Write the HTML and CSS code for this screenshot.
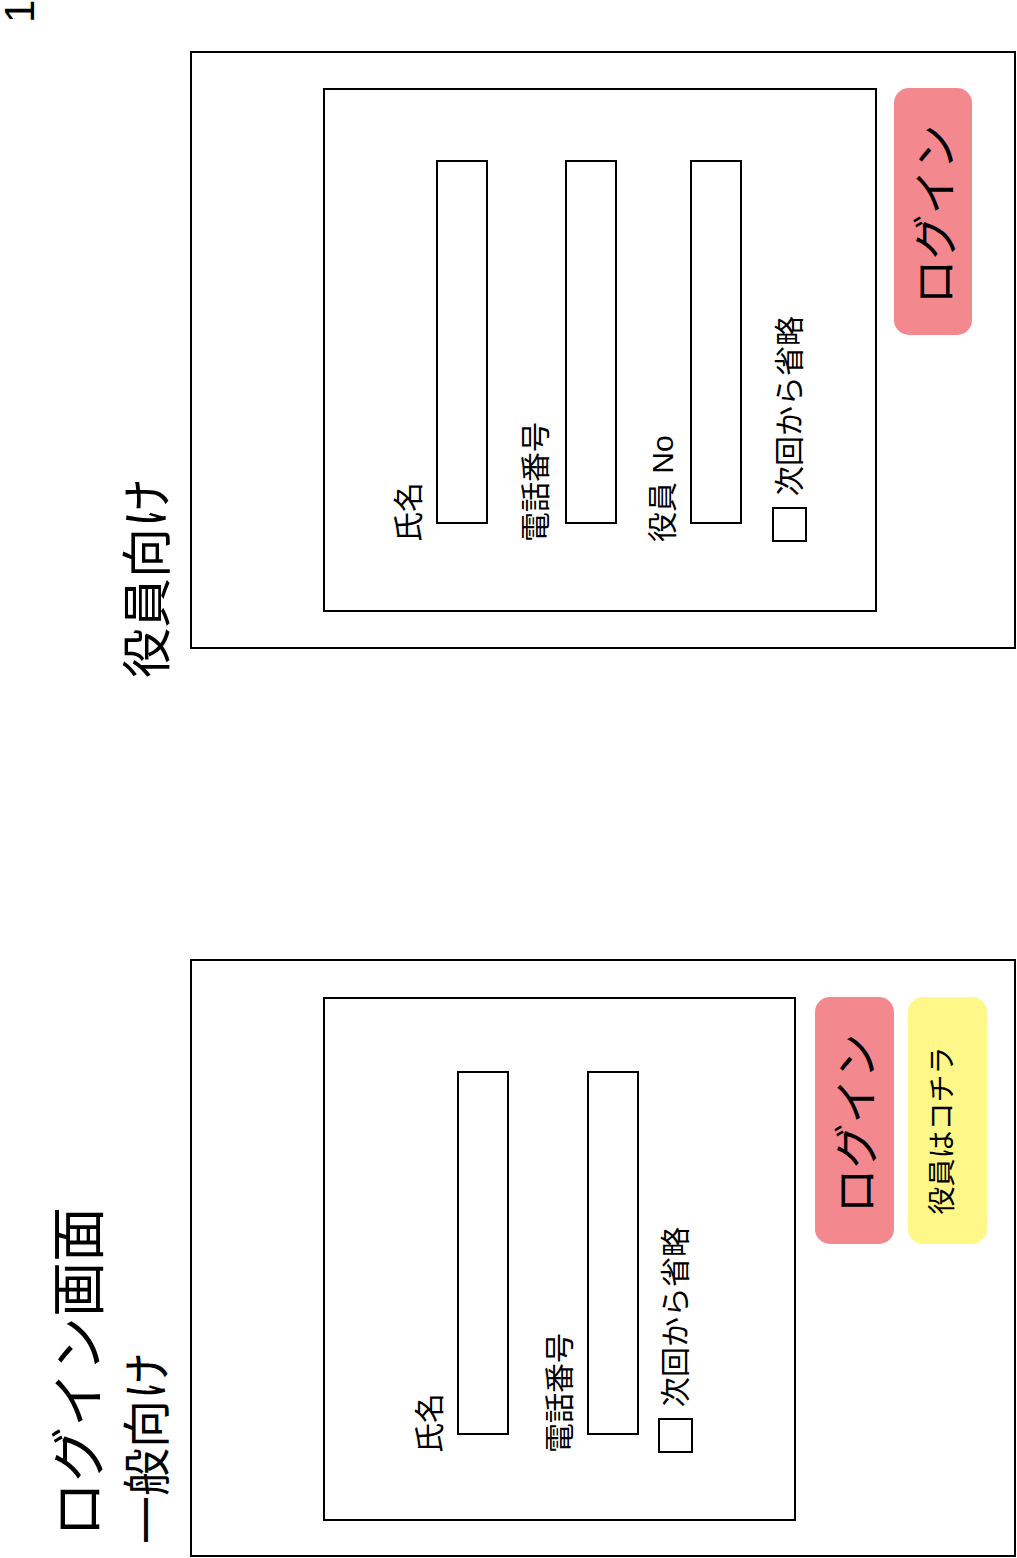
FILE: index.html
```html
<!DOCTYPE html>
<html lang="ja">
<head>
<meta charset="utf-8">
<title>ログイン画面</title>
<link rel="stylesheet" href="styles.css">
</head>
<body>
<div class="sheet">
<div class="stage">
  <section class="panel panel--general">
    <header class="panel-head">
      <h1 class="page-title">ログイン画面</h1>
      <h2 class="panel-title">一般向け</h2>
    </header>
    <div class="device">
      <div class="form-box">
        <div class="field">
          <span class="label">氏名</span>
          <span class="input"></span>
        </div>
        <div class="field">
          <span class="label">電話番号</span>
          <span class="input"></span>
        </div>
        <div class="remember">
          <span class="check"></span>
          <span class="remember-text">次回から省略</span>
        </div>
      </div>
      <div class="btn btn--login">ログイン</div>
      <div class="btn btn--exec">役員はコチラ</div>
    </div>
  </section>

  <section class="panel panel--exec">
    <header class="panel-head">
      <h2 class="panel-title">役員向け</h2>
    </header>
    <div class="device">
      <div class="form-box">
        <div class="field">
          <span class="label">氏名</span>
          <span class="input"></span>
        </div>
        <div class="field field--phone">
          <span class="label">電話番号</span>
          <span class="input"></span>
        </div>
        <div class="field field--no">
          <span class="label">役員 No</span>
          <span class="input"></span>
        </div>
        <div class="remember">
          <span class="check"></span>
          <span class="remember-text">次回から省略</span>
        </div>
      </div>
      <div class="btn btn--login">ログイン</div>
    </div>
  </section>

  <div class="page-num">1</div>
</div>
</div>
</body>
</html>
```

FILE: styles.css
```css
html, body {
  margin: 0;
  padding: 0;
  background: #ffffff;
  overflow: hidden;
}

body {
  font-family: "Liberation Sans", "Noto Sans CJK JP", sans-serif;
  color: #000000;
}

.sheet {
  width: 1017px;
  height: 1558px;
  overflow: hidden;
}

/* The whole sheet is laid out upright, then turned a quarter turn. */
.stage {
  width: 1558px;
  height: 1017px;
  display: flex;
  align-items: flex-start;
  transform-origin: 0 0;
  transform: translateY(1558px) rotate(-90deg);
}

.panel {
  width: 598px;
  display: flex;
  flex-direction: column;
  flex: none;
}

.panel--general {
  margin-left: 1px;
}

.panel--exec {
  margin-left: 310px;
}

.panel-head {
  height: 190px;
  display: flex;
  flex-direction: column;
  align-items: flex-start;
}

.page-title {
  margin: 52px 0 0 20px;
  font-size: 55px;
  line-height: 55px;
  font-weight: normal;
  white-space: nowrap;
}

.panel-title {
  margin: 0;
  font-size: 48px;
  line-height: 48px;
  font-weight: normal;
  white-space: nowrap;
}

.panel--general .panel-title {
  margin: 17px 0 0 13px;
}

.panel--exec .panel-title {
  margin: 124px 0 0 -29px;
  font-size: 50px;
  line-height: 48px;
}

.device {
  box-sizing: border-box;
  width: 598px;
  height: 826px;
  border: 2px solid #000;
  padding: 131px 0 0 34px;
  display: flex;
  flex-direction: column;
  align-items: flex-start;
}

.panel--exec .device {
  padding-left: 35px;
}

.form-box {
  box-sizing: border-box;
  width: 524px;
  height: 473px;
  border: 2px solid #000;
  padding: 90px 0 0 66px;
  display: flex;
  flex-direction: column;
  align-items: flex-start;
}

.panel--exec .form-box {
  height: 554px;
  padding: 69px 0 0 68px;
}

.field {
  display: flex;
  flex-direction: column;
  align-items: flex-start;
}

.panel--general .field + .field {
  margin-top: 36px;
}

.panel--exec .field + .field {
  margin-top: 33px;
}

.panel--exec .field--phone .input {
  margin-top: 2px;
}

.panel--exec .field + .field--no {
  margin-top: 31px;
}

.label {
  font-size: 30px;
  line-height: 30px;
  white-space: nowrap;
  margin-bottom: 12px;
}

.input {
  box-sizing: border-box;
  display: block;
  width: 364px;
  height: 52px;
  margin-left: 18px;
  border: 2px solid #000;
  background: #fff;
}

.remember {
  display: flex;
  align-items: center;
  gap: 11px;
  margin-top: 19px;
}

.panel--exec .remember {
  margin-top: 30px;
}

.check {
  box-sizing: border-box;
  width: 35px;
  height: 35px;
  border: 2px solid #000;
  background: #fff;
  flex: none;
}

.remember-text {
  font-size: 30px;
  line-height: 30px;
  white-space: nowrap;
}

.btn {
  box-sizing: border-box;
  width: 247px;
  height: 79px;
  margin-left: 277px;
  border-radius: 15px;
  display: flex;
  align-items: center;
  justify-content: center;
  white-space: nowrap;
}

.btn--login {
  margin-top: 19px;
  background: #f4888f;
  font-size: 45px;
  line-height: 45px;
  padding: 6px 6px 0 0;
}

.panel--exec .btn--login {
  margin-top: 17px;
  height: 78px;
}

.btn--exec {
  margin-top: 14px;
  background: #fff787;
  font-size: 28px;
  line-height: 28px;
  padding: 0 20px 10px 0;
}

.page-num {
  width: 22px;
  margin: 4px 0 0 28px;
  font-size: 42px;
  line-height: 32px;
  flex: none;
}
```
